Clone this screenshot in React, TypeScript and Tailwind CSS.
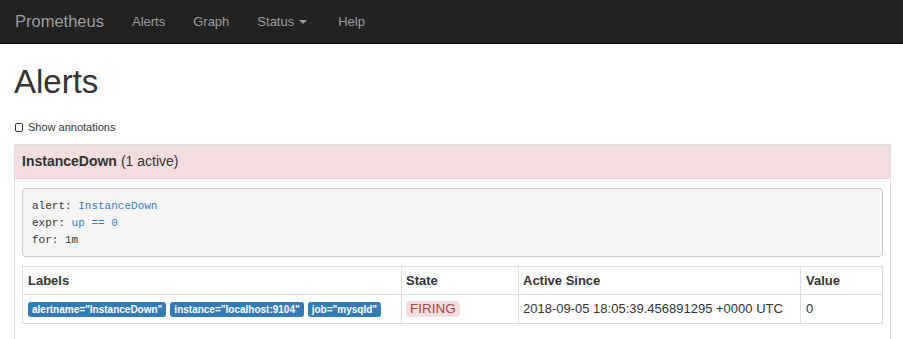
import React from "react";

const sans = { fontFamily: '"Liberation Sans", Arial, sans-serif' };

function Badge({ children }: { children: React.ReactNode }) {
  return (
    <span className="inline-block rounded-[3px] bg-[#337ab7] px-[4px] text-[10px] font-bold leading-[15px] text-white">
      {children}
    </span>
  );
}

export default function App() {
  return (
    <div className="min-h-[339px] bg-white text-[#333]" style={sans}>
      <nav className="flex h-[44px] items-center border-b border-[#080808] bg-[#222] pl-[15px] text-[#9d9d9d]">
        <span className="text-[16.5px] leading-none">Prometheus</span>
        <div className="ml-[28px] flex items-center text-[13px]">
          <span className="mr-[28px]">Alerts</span>
          <span className="mr-[28px]">Graph</span>
          <span className="mr-[31px] flex items-center">
            Status
            <span className="ml-[5px] mt-[1px] inline-block h-0 w-0 border-x-[4px] border-t-[4px] border-x-transparent border-t-[#9d9d9d]" />
          </span>
          <span>Help</span>
        </div>
      </nav>

      <div className="pl-[14px] pr-[12px]">
        <h1 className="mt-[19px] ml-[0px] text-[33px] leading-[38px] text-[#333]">Alerts</h1>

        <label className="mt-[19px] ml-[1px] flex items-center text-[11px] leading-[14px] text-[#333]">
          <span className="mr-[5px] inline-block h-[9px] w-[8px] rounded-[2px] border-[1.5px] border-[#333]" />
          Show annotations
        </label>

        <div className="mt-[10px] border border-[#ddd] border-b-0">
          <div className="flex h-[34px] items-center border-b border-[#ebccd1] bg-[#f2dede] px-[7px] text-[14px] text-[#333]">
            <span className="font-bold">InstanceDown</span>
            <span className="ml-[4px]">(1 active)</span>
          </div>
          <div className="px-[7px] pt-[9px] pb-[20px]">
            <pre
              className="rounded-[4px] border border-[#ccc] bg-[#f5f5f5] px-[9px] pt-[9px] pb-[7px] text-[11px] leading-[17px] text-[#333]"
              style={{ fontFamily: '"Liberation Mono", "DejaVu Sans Mono", monospace' }}
            >
              <div>
                alert: <span className="text-[#3a7fc1]">InstanceDown</span>
              </div>
              <div>
                expr: <span className="text-[#3a7fc1]">up == 0</span>
              </div>
              <div>
                for: <span className="text-[#333]">1m</span>
              </div>
            </pre>

            <table className="mt-[9px] w-full table-fixed border-collapse border border-[#ddd] text-[13px] text-[#333]">
              <thead>
                <tr className="h-[28px]">
                  <th className="w-[379px] border border-[#ddd] px-[5px] text-left font-bold">Labels</th>
                  <th className="w-[117px] border border-[#ddd] px-[4px] text-left font-bold">State</th>
                  <th className="w-[282px] border border-[#ddd] px-[4px] text-left font-bold">Active Since</th>
                  <th className="border border-[#ddd] px-[5px] text-left font-bold">Value</th>
                </tr>
              </thead>
              <tbody>
                <tr className="h-[29px]">
                  <td className="border border-[#ddd] px-[5px]">
                    <div className="flex gap-[4px] whitespace-nowrap">
                      <Badge>alertname="InstanceDown"</Badge>
                      <Badge>instance="localhost:9104"</Badge>
                      <Badge>job="mysqld"</Badge>
                    </div>
                  </td>
                  <td className="border border-[#ddd] px-[4px]">
                    <span className="inline-block rounded-[4px] bg-[#f2dede] px-[4px] text-[13.5px] leading-[16px] text-[#a94442]">
                      FIRING
                    </span>
                  </td>
                  <td className="whitespace-nowrap border border-[#ddd] px-[4px]">2018-09-05 18:05:39.456891295 +0000 UTC</td>
                  <td className="border border-[#ddd] px-[5px]">0</td>
                </tr>
              </tbody>
            </table>
          </div>
        </div>
      </div>
    </div>
  );
}
